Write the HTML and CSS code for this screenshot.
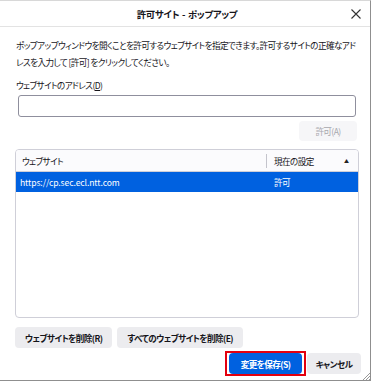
FILE: index.html
```html
<!DOCTYPE html>
<html lang="ja">
<head>
  <meta charset="UTF-8" />
  <meta name="viewport" content="width=device-width, initial-scale=1.0"/>
  <title>許可サイト - ポップアップ</title>
  <link rel="stylesheet" href="styles.css">
</head>
<body>

  <div class="dialog">
    <div class="titlebar">
      <span class="title">許可サイト - ポップアップ</span>
      <svg class="close" width="10" height="10" viewBox="0 0 10 10">
        <path d="M0.5 0.5 L9.5 9.5 M9.5 0.5 L0.5 9.5" stroke="#333" stroke-width="1.1" fill="none"/>
      </svg>
    </div>

    <div class="content">
      <p class="intro">ポップアップウィンドウを開くことを許可するウェブサイトを指定できます。許可するサイトの正確なアド<br>レスを入力して [許可] をクリックしてください。</p>

      <label class="field-label" for="address">ウェブサイトのアドレス(<u>D</u>)</label>
      <input type="text" id="address" class="address" />

      <div class="allow-row">
        <button class="btn" disabled>許可(A)</button>
      </div>

      <div class="site-list">
        <div class="list-head">
          <span class="col-site">ウェブサイト</span>
          <span class="col-status">現在の設定</span>
          <span class="sort">&#9650;</span>
        </div>
        <div class="list-row selected">
          <span class="col-site url">https://cp.sec.ecl.ntt.com</span>
          <span class="col-status">許可</span>
        </div>
      </div>

      <div class="remove-row">
        <button class="btn">ウェブサイトを削除(R)</button>
        <button class="btn">すべてのウェブサイトを削除(E)</button>
      </div>

      <div class="footer">
        <span class="highlight">
          <button class="btn primary">変更を保存(S)</button>
        </span>
        <button class="btn">キャンセル</button>
      </div>
    </div>

    <svg class="grip" width="8" height="8" viewBox="0 0 8 8">
      <path d="M8 1 L1 8 M8 4 L4 8 M8 7 L7 8" stroke="#999" stroke-width="1" fill="none"/>
    </svg>
  </div>

</body>
</html>
```

FILE: styles.css
```css
body {
  margin: 0;
  background: #fff;
  font-family: "Noto Sans CJK JP", "Noto Sans", sans-serif;
  font-size: 8.6px;
  letter-spacing: -0.6px;
  color: #15141a;
  font-feature-settings: "palt";
}
.dialog {
  position: relative;
  width: 371px;
  height: 381px;
  box-sizing: border-box;
  border-top: 1px solid #d8d8d8;
  border-right: 1px solid #8f8f8f;
  border-bottom: 1px solid #8f8f8f;
  background: #fff;
  display: flex;
  flex-direction: column;
}
.titlebar {
  height: 25px;
  flex: none;
  border-bottom: 1px solid #e3e3e3;
  display: flex;
  align-items: center;
  justify-content: center;
  position: relative;
}
.title {
  font-weight: bold;
  font-size: 9.4px;
  letter-spacing: -0.3px;
  word-spacing: 1px;
  margin-left: 4px;
}
.close {
  position: absolute;
  right: 9px;
  top: 8px;
}
.content {
  padding: 0 11px 0 15px;
  display: flex;
  flex-direction: column;
}
.intro {
  margin: 10px 0 0 1px;
  line-height: 17px;
  white-space: nowrap;
}
.field-label {
  margin: 6px 0 0 1px;
  line-height: 17px;
}
.field-label u {
  text-underline-offset: 1px;
}
.address {
  margin: 1px 3px 0 3px;
  height: 22px;
  box-sizing: border-box;
  border: 1px solid #8f8f9d;
  border-radius: 3px;
  padding: 0 6px;
  font: inherit;
}
.allow-row {
  display: flex;
  justify-content: flex-end;
  margin: 4px 2px 0 0;
}
.btn {
  font-family: inherit;
  font-size: 8.6px;
  letter-spacing: -0.6px;
  font-weight: bold;
  color: #15141a;
  background: #ececef;
  border: none;
  border-radius: 4px;
  height: 21px;
  padding: 0 10px;
  font-feature-settings: "palt";
}
.btn:disabled {
  background: #f6f6f8;
  color: #a7a7ad;
  font-weight: normal;
  width: 58px;
  height: 20px;
}
.site-list {
  margin-top: 8px;
  height: 169px;
  box-sizing: border-box;
  border: 1px solid #cfcfd8;
  border-radius: 4px;
  overflow: hidden;
}
.list-head, .list-row {
  display: flex;
  align-items: center;
}
.list-head {
  height: 21px;
  background: #fbfbfd;
  border-bottom: 1px solid #cfcfd8;
}
.list-row {
  height: 20px;
}
.col-site {
  flex: 1;
  padding-left: 6px;
}
.col-status {
  width: 70px;
  padding-left: 7px;
}
.list-head .col-status {
  border-left: 1px solid #c4c4cc;
  line-height: 14px;
}
.list-row .col-site {
  padding-left: 4px;
}
.url {
  letter-spacing: -0.1px;
}
.list-row .col-status {
  width: 84px;
  margin-left: 1px;
}
.sort {
  width: 14px;
  font-size: 5px;
  color: #222;
}
.selected {
  background: #0061e0;
  color: #fff;
}
.remove-row {
  display: flex;
  gap: 5px;
  margin-top: 9px;
}
.remove-row .btn {
  padding: 0 10px;
}
.footer {
  display: flex;
  justify-content: flex-end;
  align-items: center;
  gap: 1px;
  margin: 3px -2px 0 0;
}
.highlight {
  display: flex;
  border: 2px solid #e3000f;
  padding: 0 2px;
}
.primary {
  background: #0061e0;
  color: #fff;
  width: 73px;
  padding: 0;
}
.footer > .btn {
  width: 54px;
  padding: 0;
}
.grip {
  position: absolute;
  right: 0;
  bottom: 0;
}
```
